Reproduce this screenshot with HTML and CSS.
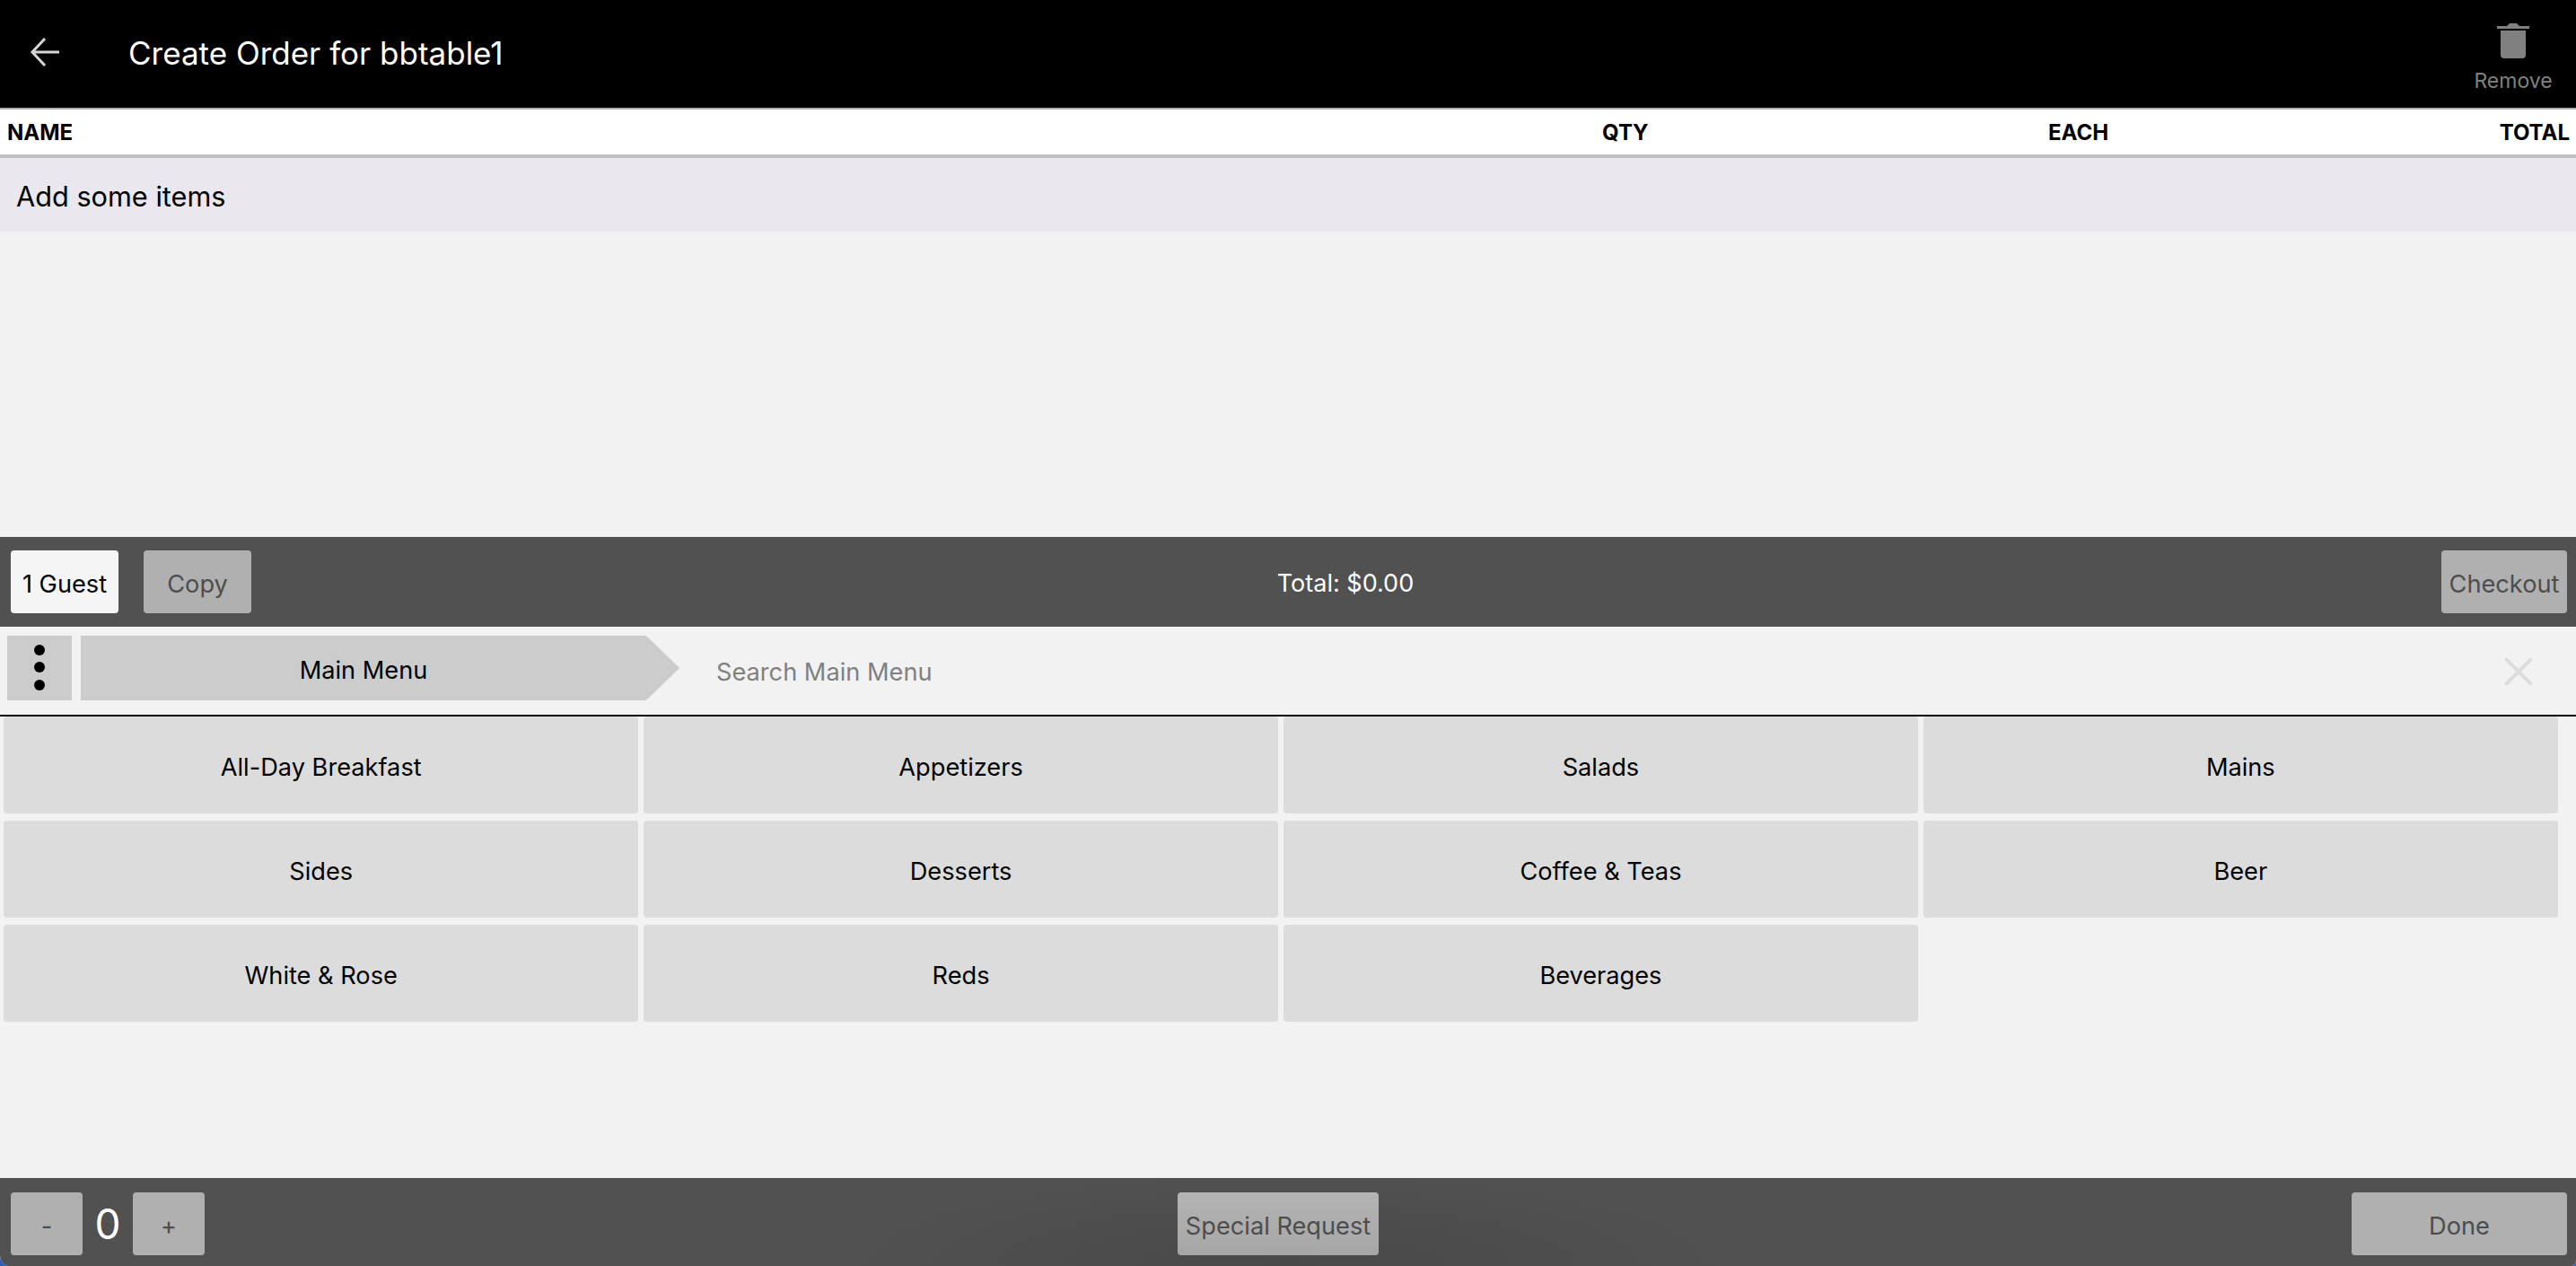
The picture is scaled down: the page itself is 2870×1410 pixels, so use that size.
FILE: index.html
```html
<!DOCTYPE html>
<html lang="en">
<head>
<meta charset="utf-8">
<title>Create Order</title>
<link rel="stylesheet" href="styles.css">
</head>
<body>
<div class="app">
  <header class="topbar">
    <svg class="back" viewBox="0 0 34 34" aria-hidden="true"><path d="M33 17H3M17 2 3 17l14 15" fill="none" stroke="#d6d6d6" stroke-width="3"/></svg>
    <h1 class="title">Create Order for bbtable1</h1>
    <div class="remove">
      <svg class="trash" viewBox="0 0 36 42" aria-hidden="true"><path d="M0 6h36v3H0zM11 6l3-3h8l3 3zM4 11h28v27a4 4 0 0 1-4 4H8a4 4 0 0 1-4-4z" fill="#808080"/></svg>
      <span>Remove</span>
    </div>
  </header>
  <div class="thead">
    <span class="th-name">NAME</span>
    <span class="th-qty">QTY</span>
    <span class="th-each">EACH</span>
    <span class="th-total">TOTAL</span>
  </div>
  <div class="empty-row">Add some items</div>
  <div class="order-space"></div>
  <div class="bar bar-order">
    <button class="btn btn-light btn-guest">1 Guest</button>
    <button class="btn btn-copy">Copy</button>
    <div class="total">Total: $0.00</div>
    <button class="btn btn-checkout">Checkout</button>
  </div>
  <div class="crumbs">
    <div class="dots"><i></i><i></i><i></i></div>
    <div class="crumb">Main Menu</div>
    <div class="search">Search Main Menu</div>
    <svg class="clear" viewBox="0 0 32 32" aria-hidden="true"><path d="M1.5 1.5l29 29M30.500 1.500l-29 29" stroke="#dcdcdc" stroke-width="4" fill="none"/></svg>
  </div>
  <main class="menu">
    <button class="card">All-Day Breakfast</button>
    <button class="card">Appetizers</button>
    <button class="card">Salads</button>
    <button class="card">Mains</button>
    <button class="card">Sides</button>
    <button class="card">Desserts</button>
    <button class="card">Coffee &amp; Teas</button>
    <button class="card">Beer</button>
    <button class="card">White &amp; Rose</button>
    <button class="card">Reds</button>
    <button class="card">Beverages</button>
  </main>
  <div class="bar bar-bottom">
    <div class="stepper">
      <button class="btn btn-step">-</button>
      <span class="count">0</span>
      <button class="btn btn-step">+</button>
    </div>
    <button class="btn btn-special">Special Request</button>
    <button class="btn btn-done">Done</button>
  </div>
</div>
</body>
</html>
```
FILE: styles.css
```css
* { box-sizing: border-box; }
html, body { margin: 0; height: 100%; background: #2f5fb5; }
body { font-family: Inter, "Liberation Sans", sans-serif; overflow: hidden; }
.app { height: 1410px; display: flex; flex-direction: column; background: #f2f2f2; border-radius: 0 0 5px 10px / 0 0 7px 12px; overflow: hidden; }
button { font: inherit; border: 0; padding: 0; }

.topbar { height: 122px; flex: none; background: #000; border-bottom: 2px solid #b0b0b0; display: flex; align-items: center; color: #fff; }
.back { width: 34px; height: 34px; margin-left: 33px; margin-top: -4px; flex: none; }
.title { margin: -2px 0 0 76px; font-size: 35px; font-weight: 400; flex: 1; }
.remove { width: 100px; margin-right: 20px; padding-top: 6px; display: flex; flex-direction: column; align-items: center; color: #808080; font-size: 23px; }
.trash { width: 36px; height: 42px; margin-bottom: 11px; }

.thead { height: 54px; flex: none; background: #fff; border-bottom: 4px solid #c0c0c0; display: flex; align-items: center; font-size: 24px; font-weight: 700; padding: 0 7px 0 8px; }
.th-name { width: 1777px; }
.th-qty { width: 497px; }
.th-each { flex: 1; }
.empty-row { height: 82px; flex: none; background: #eae8ee; display: flex; align-items: center; padding: 3px 0 0 18px; font-size: 30.7px; }
.order-space { flex: 1; }

.bar { flex: none; background: #515151; display: flex; align-items: center; }
.bar-order { height: 100px; padding: 0 10px 0 12px; }
.btn { height: 70px; padding-top: 4px; border-radius: 4px; background: #b0b0b0; color: #4d4d4d; font-size: 27.2px; flex: none; }
.btn-light { background: #f5f5f5; color: #000; }
.btn-guest { width: 120px; }
.btn-copy { width: 120px; margin-left: 28px; }
.total { flex: 1; text-align: center; color: #fff; font-size: 27px; margin-left: -2px; padding-top: 3px; }
.btn-checkout { width: 140px; }

.crumbs { height: 100px; flex: none; border-bottom: 2px solid #000; display: flex; align-items: center; padding: 0 0 6px 8px; }
.dots { width: 72px; height: 72px; padding-bottom: 2px; background: #cccccc; display: flex; flex-direction: column; align-items: center; justify-content: center; gap: 7.500px; }
.dots i { width: 12px; height: 12px; border-radius: 50%; background: #000; }
.crumb { width: 667px; height: 72px; margin-left: 10px; background: #cccccc; clip-path: polygon(0 0, 630px 0, 100% 50%, 630px 100%, 0 100%); display: flex; align-items: center; justify-content: center; padding: 4px 37px 0 0; font-size: 27.200px; }
.search { flex: 1; margin: 8px 0 0 41px; color: #808080; font-size: 27.2px; }
.clear { width: 32px; height: 32px; margin: 8px 48px 0 0; flex: none; }

.menu { flex: none; height: 514px; padding: 0 20px 0 4px; display: grid; grid-template-columns: repeat(4, 1fr); grid-auto-rows: 108px; gap: 8px 5.5px; align-content: start; }
.card { background: #dcdcdc; border-radius: 4px; color: #000; font-size: 27.2px; padding-top: 4px; }

.bar-bottom { height: 98px; padding: 16px 10px 0 12px; justify-content: space-between; align-items: flex-start; background: radial-gradient(ellipse 520px 110px at 50% 100%, #494949, #515151); }
.stepper { width: 216px; display: flex; align-items: center; }
.btn-step { width: 80px; }
.count { width: 56px; text-align: center; color: #fff; font-size: 46px; }
.btn-special { width: 224px; background: linear-gradient(#b4b4b4, #a6a6a6); }
.btn-done { width: 240px; }
```
